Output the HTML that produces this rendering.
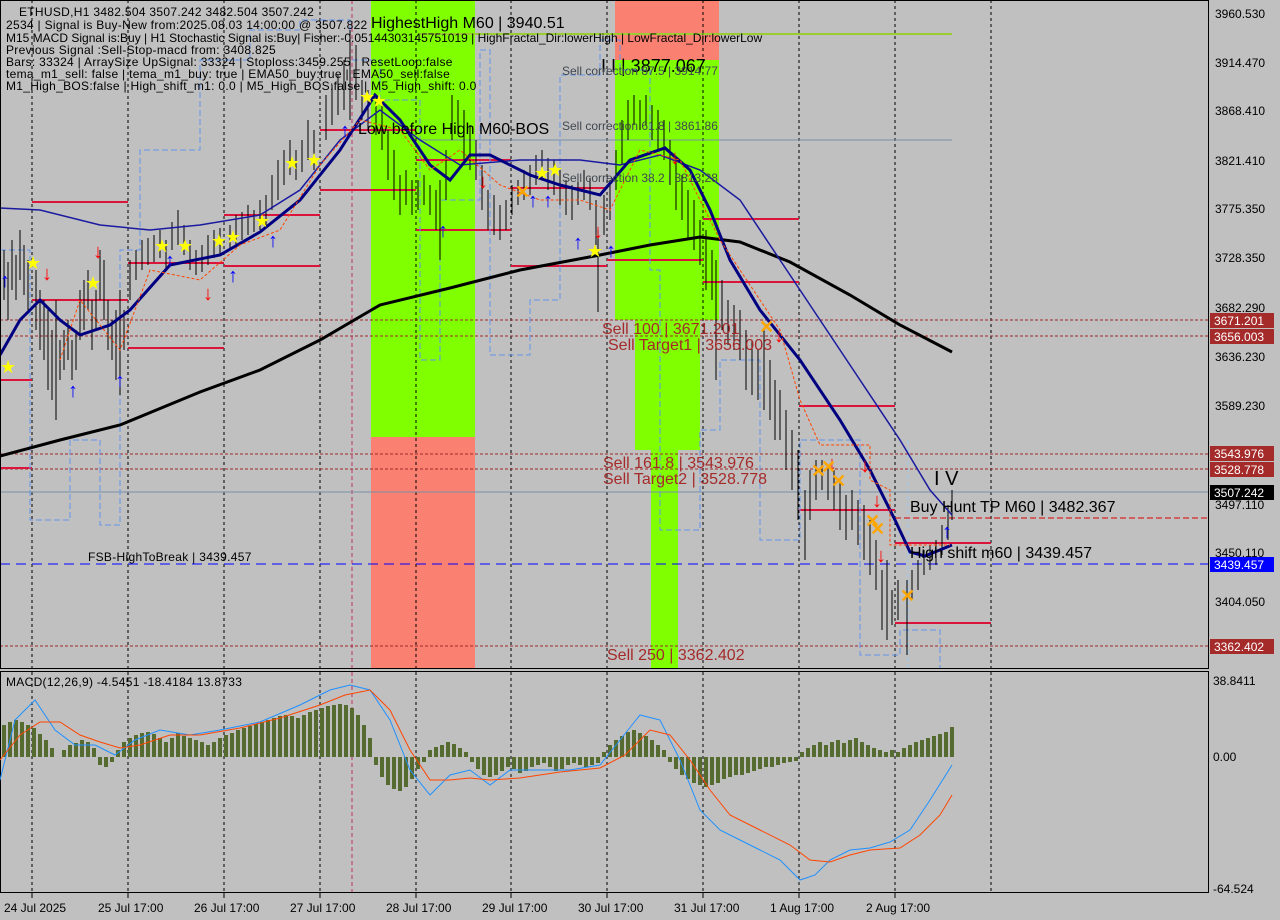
<!DOCTYPE html>
<html><head><meta charset="utf-8"><style>
html,body{margin:0;padding:0;background:#c0c0c0;}
svg{display:block;font-family:"Liberation Sans",sans-serif;}
</style></head><body>
<svg width="1280" height="920" viewBox="0 0 1280 920" xmlns="http://www.w3.org/2000/svg">
<rect width="1280" height="920" fill="#c0c0c0"/>
<rect x="371" y="0" width="104" height="437" fill="#7fff00"/>
<rect x="371" y="437" width="104" height="232" fill="#fa8072"/>
<rect x="615" y="0" width="104" height="60" fill="#fa8072"/>
<rect x="615" y="60" width="104" height="260" fill="#7fff00"/>
<rect x="635" y="320" width="65" height="130" fill="#7fff00"/>
<rect x="651" y="450" width="27" height="219" fill="#7fff00"/>
<g stroke="#000" stroke-width="1" stroke-dasharray="3,3">
<line x1="32" y1="0" x2="32" y2="893"/><line x1="128" y1="0" x2="128" y2="893"/>
<line x1="224" y1="0" x2="224" y2="893"/><line x1="320" y1="0" x2="320" y2="893"/>
<line x1="416" y1="0" x2="416" y2="893"/><line x1="511" y1="0" x2="511" y2="893"/>
<line x1="607" y1="0" x2="607" y2="893"/><line x1="703" y1="0" x2="703" y2="893"/>
<line x1="799" y1="0" x2="799" y2="893"/><line x1="895" y1="0" x2="895" y2="893"/>
<line x1="991" y1="0" x2="991" y2="893"/>
</g>
<line x1="352" y1="0" x2="352" y2="893" stroke="#c0306a" stroke-dasharray="4,3"/>
<line x1="908" y1="440" x2="908" y2="669" stroke="#9cc7f0" stroke-dasharray="4,3"/>
<g stroke="#a02828" stroke-dasharray="3,2">
<line x1="0" y1="320" x2="1209" y2="320"/><line x1="0" y1="336" x2="1209" y2="336"/>
<line x1="0" y1="454" x2="1209" y2="454"/><line x1="0" y1="469" x2="1209" y2="469"/>
<line x1="0" y1="646" x2="1209" y2="646"/>
</g>
<line x1="0" y1="492" x2="1209" y2="492" stroke="#7890a8"/>
<line x1="0" y1="564" x2="1209" y2="564" stroke="#0000ff" stroke-dasharray="10,6"/>
<line x1="895" y1="518" x2="1209" y2="518" stroke="#e00000" stroke-dasharray="6,3"/>
<line x1="420" y1="34" x2="952" y2="34" stroke="#9acd32" stroke-width="2"/>
<line x1="420" y1="140" x2="952" y2="140" stroke="#7890a8"/>
<g stroke="#dc143c" stroke-width="2">
<line x1="32" y1="202" x2="128" y2="202"/><line x1="32" y1="300" x2="128" y2="300"/>
<line x1="128" y1="263" x2="224" y2="263"/><line x1="128" y1="348" x2="224" y2="348"/>
<line x1="224" y1="215" x2="320" y2="215"/><line x1="224" y1="266" x2="320" y2="266"/>
<line x1="320" y1="130" x2="416" y2="130"/><line x1="320" y1="190" x2="416" y2="190"/>
<line x1="416" y1="160" x2="511" y2="160"/><line x1="416" y1="230" x2="511" y2="230"/>
<line x1="511" y1="188" x2="607" y2="188"/><line x1="511" y1="266" x2="607" y2="266"/>
<line x1="607" y1="260" x2="703" y2="260"/><line x1="703" y1="219" x2="799" y2="219"/>
<line x1="703" y1="282" x2="799" y2="282"/><line x1="799" y1="406" x2="895" y2="406"/>
<line x1="799" y1="510" x2="895" y2="510"/><line x1="895" y1="543" x2="991" y2="543"/>
<line x1="895" y1="623" x2="991" y2="623"/><line x1="0" y1="380" x2="32" y2="380"/><line x1="0" y1="468" x2="32" y2="468"/>
</g>
<polyline fill="none" stroke="#6495ed" stroke-dasharray="6,3" points="0,250 30,250 30,520 70,520 70,440 100,440 100,525 120,525 120,250 140,250 140,150 200,150 200,60 250,60 250,30 300,30 300,20 350,20 350,60 380,60 380,100 420,100 420,360 440,360 440,200 480,200 480,50 490,50 490,355 530,355 530,300 560,300 560,75 600,75 600,40 620,40 620,70 650,70 650,270 660,270 660,530 700,530 700,430 720,430 720,360 760,360 760,540 800,540 800,440 860,440 860,655 900,655 900,630 940,630 940,669"/>
<!-- candle wicks -->
<path stroke="#000" stroke-width="1" fill="none" d="M4 250V300M8 262V320M12 240V290M16 255V300M20 230V280M24 245V295M28 260V310M36 270V330M40 290V350M44 300V360M48 310V390M52 330V400M56 300V420M60 340V380M64 330V370M68 320V360M72 340V380M76 330V370M80 290V340M84 280V330M88 270V310M92 300V350M96 290V330M100 250V300M104 260V320M108 300V350M112 320V360M116 310V380M120 290V395M124 310V350M130 260V300M136 250V280M142 240V270M148 238V265M154 235V262M160 230V258M166 240V270M172 222V250M178 210V245M184 225V255M190 240V270M196 250V275M202 245V272M208 235V265M214 230V258M220 228V255M230 225V250M236 215V245M242 212V240M248 205V235M254 210V232M260 200V230M266 195V225M272 175V210M278 160V200M284 150V185M290 140V175M296 150V180M302 140V172M308 120V160M314 130V170M326 95V140M332 85V125M338 75V115M344 60V110M350 30V120M356 45V100M362 80V120M368 90V130M376 95V135M382 105V150M388 130V180M394 150V200M400 175V215M406 170V205M412 180V215M418 180V210M424 175V205M430 185V215M436 190V230M440 180V260M446 150V200M452 95V140M458 100V135M464 110V160M470 125V170M476 140V180M482 165V210M488 190V230M494 195V235M500 205V240M506 200V230M512 185V215M518 180V205M524 170V200M530 165V195M536 155V185M542 150V180M548 158V190M554 160V195M560 170V205M566 180V215M572 185V220M578 175V205M584 170V200M590 178V210M596 200V245M598 230V312M604 195V235M610 180V220M616 150V190M622 120V165M628 100V140M634 95V125M640 100V130M646 95V125M652 105V140M658 110V150M664 120V160M670 140V185M676 160V210M682 175V220M688 190V240M694 200V250M700 220V265M706 230V290M712 250V300M716 260V380M722 280V330M728 300V345M734 305V350M740 310V360M746 330V390M752 340V395M758 350V400M764 330V410M770 360V420M775 380V440M780 390V440M786 410V470M792 430V490M798 450V520M805 490V560M810 470V520M816 460V500M822 460V490M828 465V500M834 470V510M840 480V530M846 495V540M852 490V530M858 500V545M864 505V560M870 520V575M876 540V590M882 570V630M887 560V640M892 590V625M898 580V620M907 580V655M912 570V600M918 560V590M924 550V575M930 545V570M936 540V565M942 525V555M948 505V540M952 490V520"/>
<polyline fill="none" stroke="#000" stroke-width="3" points="0,456 60,440 120,425 200,392 260,370 320,340 380,305 450,288 520,270 600,255 650,245 700,237 740,242 790,262 850,295 900,325 952,352"/>
<polyline fill="none" stroke="#1a1aa0" stroke-width="1.5" points="0,208 40,210 100,225 150,230 200,225 260,215 300,190 340,140 380,110 420,140 460,165 520,160 580,160 620,165 660,155 700,170 740,200 780,260 820,320 860,380 900,440 930,490 952,515"/>
<polyline fill="none" stroke="#000080" stroke-width="3" points="0,355 20,320 40,300 60,320 80,335 110,325 130,310 170,265 220,255 260,232 300,200 340,150 375,95 400,120 430,165 450,180 470,155 490,155 530,175 560,185 600,195 630,160 665,148 690,170 710,210 730,260 760,310 800,360 840,420 870,470 895,520 910,552 925,556 952,545"/>
<polyline fill="none" stroke="#ff4500" stroke-dasharray="3,2" points="60,360 80,300 120,350 150,270 200,280 240,245 280,230 320,165 360,120 400,130 430,170 460,150 500,185 540,200 580,200 610,210 640,150 680,160 700,200 720,240 740,270 760,300 780,330 800,400 820,445 870,445 870,480 890,490 890,545 950,545"/>
<g fill="#ff0000" font-size="20" font-weight="bold">
<text x="42" y="280">↓</text><text x="93" y="258">↓</text><text x="203" y="300">↓</text><text x="478" y="188">↓</text><text x="593" y="238">↓</text><text x="670" y="164">↓</text><text x="774" y="342">↓</text><text x="827" y="470">↓</text><text x="860" y="472">↓</text><text x="872" y="507">↓</text><text x="876" y="562">↓</text>
</g>
<g fill="#0000ff" font-size="20" font-weight="bold">
<text x="0" y="287">↑</text><text x="68" y="397">↑</text><text x="115" y="387">↑</text><text x="165" y="267">↑</text><text x="228" y="282">↑</text><text x="268" y="247">↑</text><text x="340" y="137">↑</text><text x="438" y="237">↑</text><text x="528" y="207">↑</text><text x="543" y="207">↑</text><text x="573" y="249">↑</text><text x="606" y="257">↑</text><text x="942" y="538">↑</text>
</g>
<g fill="#ffff00" font-size="18">
<text x="25" y="269">★</text><text x="85" y="289">★</text><text x="154" y="252">★</text><text x="177" y="252">★</text><text x="211" y="247">★</text><text x="225" y="243">★</text><text x="254" y="227">★</text><text x="284" y="169">★</text><text x="306" y="166">★</text><text x="359" y="103">★</text><text x="371" y="107">★</text><text x="534" y="179">★</text><text x="547" y="176">★</text><text x="587" y="257">★</text><text x="0" y="373">★</text>
</g>
<g fill="#ffa500" font-size="18" font-weight="bold">
<text x="515" y="198">✕</text><text x="759" y="333">✕</text><text x="811" y="477">✕</text><text x="821" y="473">✕</text><text x="831" y="487">✕</text><text x="865" y="527">✕</text><text x="870" y="535">✕</text><text x="900" y="602">✕</text>
</g>
<rect x="0.5" y="0.5" width="1208" height="668" fill="none" stroke="#000"/>
<rect x="0.5" y="671.5" width="1208" height="221" fill="none" stroke="#000"/>
<g fill="#556b2f">
<path d="M2 757V725h4v32zM8 757V722h4v35zM14 757V720h4v37zM20 757V722h4v35zM26 757V725h4v32zM32 757V728h4v29zM38 757V734h4v23zM44 757V740h4v17zM50 757V748h4v9zM62 757V750h4v7zM68 757V745h4v12zM74 757V743h4v14zM80 757V740h4v17zM86 757V742h4v15zM92 757V748h4v9zM98 757h4v8h-4zM104 757h4v10h-4zM110 757h4v5h-4zM116 757V750h4v7zM122 757V742h4v15zM128 757V738h4v19zM134 757V735h4v22zM140 757V733h4v24zM146 757V732h4v25zM152 757V734h4v23zM158 757V738h4v19zM164 757V742h4v15zM170 757V738h4v19zM176 757V733h4v24zM182 757V736h4v21zM188 757V738h4v19zM194 757V740h4v17zM200 757V742h4v15zM206 757V745h4v12zM212 757V742h4v15zM218 757V738h4v19zM224 757V735h4v22zM230 757V733h4v24zM236 757V730h4v27zM242 757V728h4v29zM248 757V726h4v31zM254 757V724h4v33zM260 757V722h4v35zM266 757V720h4v37zM272 757V718h4v39zM278 757V716h4v41zM284 757V715h4v42zM290 757V716h4v41zM296 757V718h4v39zM302 757V715h4v42zM308 757V712h4v45zM314 757V710h4v47zM320 757V708h4v49zM326 757V706h4v51zM332 757V705h4v52zM338 757V704h4v53zM344 757V705h4v52zM350 757V708h4v49zM356 757V715h4v42zM362 757V725h4v32zM368 757V738h4v19zM374 757h4v8h-4zM380 757h4v20h-4zM386 757h4v28h-4zM392 757h4v32h-4zM398 757h4v34h-4zM404 757h4v30h-4zM410 757h4v22h-4zM416 757h4v12h-4zM422 757h4v5h-4zM428 757V750h4v7zM434 757V747h4v10zM440 757V745h4v12zM446 757V742h4v15zM452 757V744h4v13zM458 757V748h4v9zM464 757V752h4v5zM470 757h4v5h-4zM476 757h4v12h-4zM482 757h4v18h-4zM488 757h4v20h-4zM494 757h4v18h-4zM500 757h4v14h-4zM506 757h4v10h-4zM512 757h4v12h-4zM518 757h4v16h-4zM524 757h4v14h-4zM530 757h4v10h-4zM536 757h4v8h-4zM542 757h4v6h-4zM548 757h4v10h-4zM554 757h4v14h-4zM560 757h4v12h-4zM566 757h4v8h-4zM572 757h4v6h-4zM578 757h4v8h-4zM584 757h4v10h-4zM590 757h4v8h-4zM596 757h4v6h-4zM602 757V752h4v5zM608 757V745h4v12zM614 757V740h4v17zM620 757V736h4v21zM626 757V732h4v25zM632 757V730h4v27zM638 757V733h4v24zM644 757V736h4v21zM650 757V740h4v17zM656 757V745h4v12zM662 757V750h4v7zM668 757h4v5h-4zM674 757h4v12h-4zM680 757h4v18h-4zM686 757h4v22h-4zM692 757h4v26h-4zM698 757h4v28h-4zM704 757h4v30h-4zM710 757h4v28h-4zM716 757h4v26h-4zM722 757h4v22h-4zM728 757h4v20h-4zM734 757h4v18h-4zM740 757h4v18h-4zM746 757h4v16h-4zM752 757h4v14h-4zM758 757h4v12h-4zM764 757h4v10h-4zM770 757h4v10h-4zM776 757h4v8h-4zM782 757h4v6h-4zM788 757h4v5h-4zM794 757h4v4h-4zM800 757V752h4v5zM806 757V748h4v9zM812 757V745h4v12zM818 757V742h4v15zM824 757V745h4v12zM830 757V742h4v15zM836 757V740h4v17zM842 757V743h4v14zM848 757V740h4v17zM854 757V738h4v19zM860 757V742h4v15zM866 757V745h4v12zM872 757V748h4v9zM878 757V750h4v7zM884 757V752h4v5zM890 757V750h4v7zM896 757V752h4v5zM902 757V748h4v9zM908 757V745h4v12zM914 757V742h4v15zM920 757V740h4v17zM926 757V738h4v19zM932 757V736h4v21zM938 757V734h4v23zM944 757V732h4v25zM950 757V727h4v30z"/>
</g>
<polyline fill="none" stroke="#1e90ff" points="0,780 15,720 35,700 55,730 75,745 95,745 115,755 135,740 160,730 190,735 220,730 260,722 300,705 330,690 350,685 370,690 390,720 410,770 430,795 450,775 470,770 490,785 510,770 540,770 570,770 600,765 620,740 640,715 660,720 680,760 700,810 720,830 740,840 760,850 780,860 800,880 815,875 830,860 850,850 870,848 890,842 910,830 930,800 952,765"/>
<polyline fill="none" stroke="#ff4500" points="0,760 20,735 40,722 60,722 80,735 100,742 120,748 140,745 170,735 200,735 240,728 280,718 320,705 345,695 370,690 390,710 410,750 430,780 450,780 470,778 490,780 520,778 560,772 600,768 625,755 650,730 670,735 690,760 710,790 730,815 760,830 790,845 810,860 830,862 850,855 870,850 900,848 920,835 940,815 952,795"/>
<g font-size="12" fill="#000" letter-spacing="0.3">
<text x="19" y="16">ETHUSD,H1  3482.504 3507.242 3482.504 3507.242</text>
<text x="6" y="29">2534 | Signal is Buy-New from:2025.08.03 14:00:00 @ 3507.822</text>
<text x="6" y="42" letter-spacing="0">M15 MACD Signal is:Buy | H1 Stochastic Signal is:Buy| Fisher:-0.05144303145751019 | HighFractal_Dir:lowerHigh | LowFractal_Dir:lowerLow</text>
<text x="6" y="54">Previous Signal :Sell-Stop-macd from: 3408.825</text>
<text x="6" y="66">Bars: 33324 | ArraySize UpSignal: 33324 | Stoploss:3459.255 | ResetLoop:false</text>
<text x="6" y="78">tema_m1_sell: false | tema_m1_buy: true | EMA50_buy:true | EMA50_sell:false</text>
<text x="6" y="90">M1_High_BOS:false | High_shift_m1: 0.0 | M5_High_BOS:false | M5_High_shift: 0.0</text>
<text x="6" y="686">MACD(12,26,9) -4.5451 -18.4184 13.8733</text>
<text x="88" y="561">FSB-HighToBreak | 3439.457</text>
</g>
<g font-size="16" fill="#000">
<text x="371" y="28">HighestHigh    M60 | 3940.51</text>
<text x="601" y="72" font-size="18">I I | 3877.067</text>
<text x="358" y="134">Low before High  M60-BOS</text>
<text x="910" y="512">Buy Hunt TP M60 | 3482.367</text>
<text x="910" y="558">High shift m60 | 3439.457</text>
<text x="934" y="485" font-size="20">I V</text>
</g>
<g font-size="12" fill="#404850">
<text x="562" y="75">Sell correction 87.5 | 3914.77</text>
<text x="562" y="130">Sell correction 61.8 | 3861.86</text>
<text x="562" y="182">Sell correction 38.2 | 3813.28</text>
</g>
<g font-size="16" fill="#a52a2a">
<text x="602" y="334">Sell 100 | 3671.201</text>
<text x="608" y="350">Sell Target1 | 3656.003</text>
<text x="603" y="468">Sell 161.8 | 3543.976</text>
<text x="603" y="484">Sell Target2 | 3528.778</text>
<text x="607" y="660">Sell  250 | 3362.402</text>
</g>
<g font-size="12" fill="#000">
<text x="1215" y="18">3960.530</text><text x="1215" y="67">3914.470</text><text x="1215" y="115">3868.410</text><text x="1215" y="165">3821.410</text><text x="1215" y="213">3775.350</text><text x="1215" y="262">3728.350</text><text x="1215" y="312">3682.290</text><text x="1215" y="361">3636.230</text><text x="1215" y="410">3589.230</text><text x="1215" y="509">3497.110</text><text x="1215" y="557">3450.110</text><text x="1215" y="606">3404.050</text>
<text x="1213" y="685">38.8411</text><text x="1213" y="761">0.00</text><text x="1213" y="893">-64.524</text>
</g>
<g font-size="12" fill="#fff">
<rect x="1210" y="313" width="64" height="15" fill="#a52a2a"/><text x="1214" y="325">3671.201</text>
<rect x="1210" y="329" width="64" height="15" fill="#a52a2a"/><text x="1214" y="341">3656.003</text>
<rect x="1210" y="446" width="64" height="15" fill="#a52a2a"/><text x="1214" y="458">3543.976</text>
<rect x="1210" y="462" width="64" height="15" fill="#a52a2a"/><text x="1214" y="474">3528.778</text>
<rect x="1210" y="485" width="64" height="15" fill="#000"/><text x="1214" y="497">3507.242</text>
<rect x="1210" y="557" width="64" height="15" fill="#0000ff"/><text x="1214" y="569">3439.457</text>
<rect x="1210" y="639" width="64" height="15" fill="#a52a2a"/><text x="1214" y="651">3362.402</text>
</g>
<g font-size="12" fill="#000">
<text x="4" y="912">24 Jul 2025</text><text x="98" y="912">25 Jul 17:00</text><text x="194" y="912">26 Jul 17:00</text><text x="290" y="912">27 Jul 17:00</text><text x="386" y="912">28 Jul 17:00</text><text x="482" y="912">29 Jul 17:00</text><text x="578" y="912">30 Jul 17:00</text><text x="674" y="912">31 Jul 17:00</text><text x="770" y="912">1 Aug 17:00</text><text x="866" y="912">2 Aug 17:00</text>
</g>
<g stroke="#000"><line x1="32" y1="893" x2="32" y2="898"/><line x1="128" y1="893" x2="128" y2="898"/><line x1="224" y1="893" x2="224" y2="898"/><line x1="320" y1="893" x2="320" y2="898"/><line x1="416" y1="893" x2="416" y2="898"/><line x1="511" y1="893" x2="511" y2="898"/><line x1="607" y1="893" x2="607" y2="898"/><line x1="703" y1="893" x2="703" y2="898"/><line x1="799" y1="893" x2="799" y2="898"/><line x1="895" y1="893" x2="895" y2="898"/></g>
</svg>
</body></html>
